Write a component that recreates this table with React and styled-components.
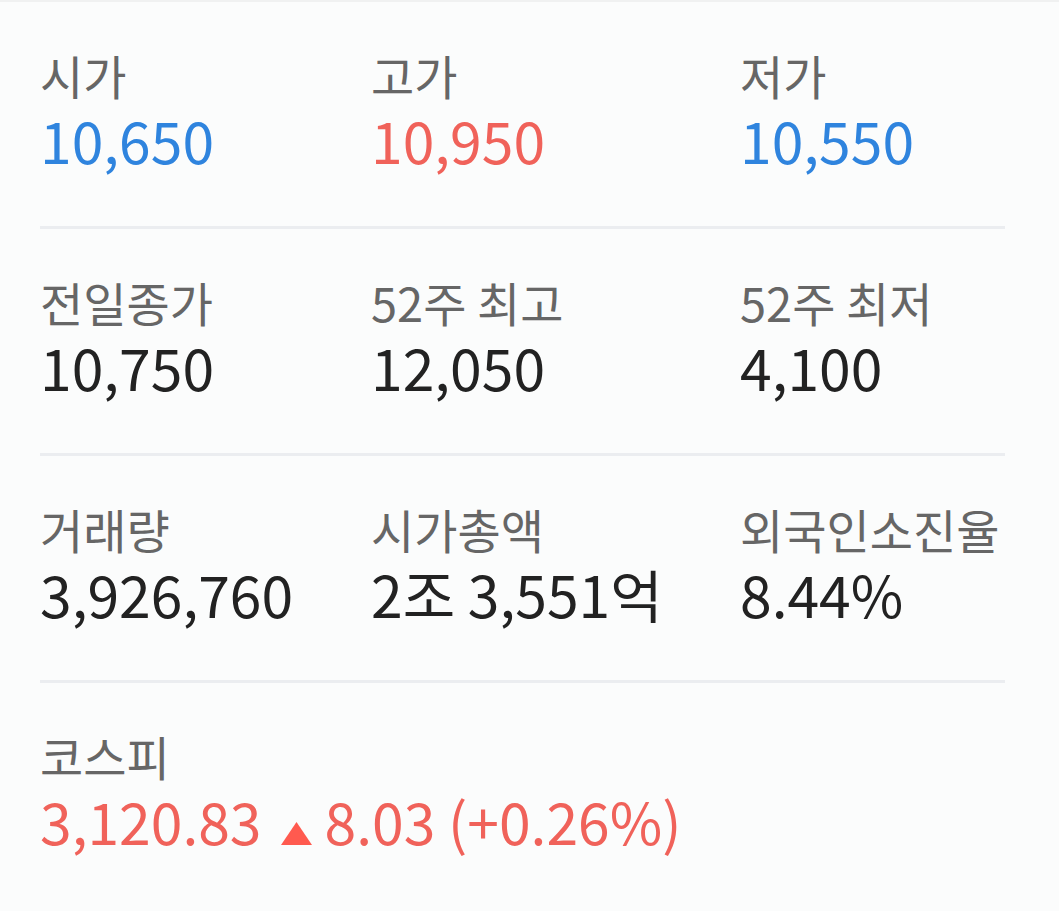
import React from "react";
import styled, { createGlobalStyle } from "styled-components";

const GlobalStyle = createGlobalStyle`
  html, body {
    margin: 0;
    padding: 0;
    background: #fbfcfc;
  }
  body {
    font-family: "Noto Sans CJK KR", "Noto Sans", sans-serif;
  }
`;

const Page = styled.div`
  border-top: 2px solid #f0f1f1;
  padding: 0 54px 0 40px;
`;

const Section = styled.div`
  display: grid;
  grid-template-columns: 331px 369px 1fr;
  padding: 43px 0 53px;
  border-bottom: ${(p) => (p.last ? "none" : "3px solid #ebedf0")};
`;

const Cell = styled.div`
  display: flex;
  flex-direction: column;
  white-space: nowrap;
`;

const Label = styled.div`
  font-size: 47px;
  line-height: 60px;
  color: #666;
`;

const Value = styled.div`
  font-size: 57px;
  line-height: 68px;
  color: ${(p) => p.color || "#222"};
`;

const Up = styled.svg`
  display: inline-block;
  width: 31px;
  height: 23px;
  margin: 0 13px 0 19px;
  vertical-align: baseline;
`;

const BLUE = "#2f84de";
const RED = "#f0625a";

const rows = [
  [
    ["시가", "10,650", BLUE],
    ["고가", "10,950", RED],
    ["저가", "10,550", BLUE],
  ],
  [
    ["전일종가", "10,750"],
    ["52주 최고", "12,050"],
    ["52주 최저", "4,100"],
  ],
  [
    ["거래량", "3,926,760"],
    ["시가총액", "2조 3,551억"],
    ["외국인소진율", "8.44%"],
  ],
];

export default function App() {
  return (
    <>
      <GlobalStyle />
      <Page>
        {rows.map((row, i) => (
          <Section key={i}>
            {row.map(([label, value, color]) => (
              <Cell key={label}>
                <Label>{label}</Label>
                <Value color={color}>{value}</Value>
              </Cell>
            ))}
          </Section>
        ))}
        <Section last>
          <Cell>
            <Label>코스피</Label>
            <Value color={RED}>
              3,120.83
              <Up viewBox="0 0 31 23">
                <polygon points="15.5,0 31,23 0,23" fill="#ff5a4f" />
              </Up>
              8.03 (+0.26%)
            </Value>
          </Cell>
        </Section>
      </Page>
    </>
  );
}
